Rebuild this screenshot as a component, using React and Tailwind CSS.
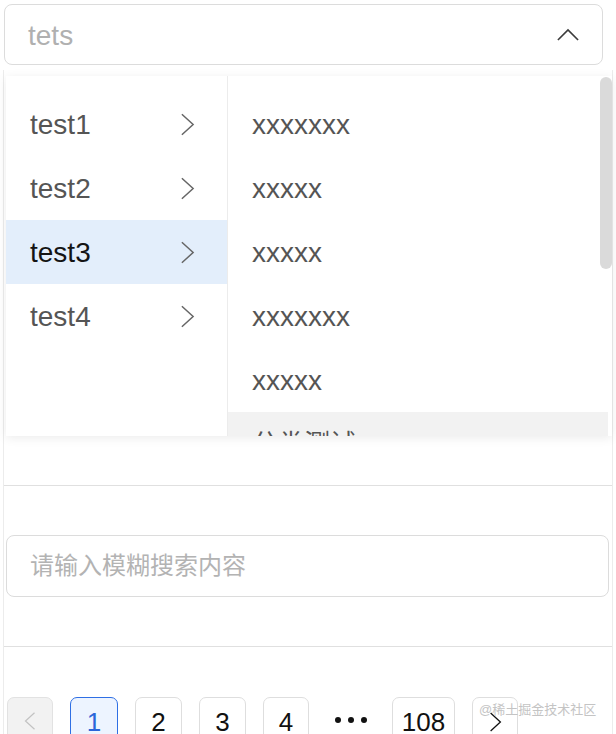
import { useState } from "react"

const ChevronRight = ({ className }) => (
  <svg viewBox="0 0 16 24" className={className} fill="none" stroke="currentColor" strokeWidth="1.6">
    <path d="M2 1 L14 12 L2 23" />
  </svg>
)

const ChevronLeft = ({ className }) => (
  <svg viewBox="0 0 16 24" className={className} fill="none" stroke="currentColor" strokeWidth="1.6">
    <path d="M14 1 L2 12 L14 23" />
  </svg>
)

const ChevronUp = ({ className }) => (
  <svg viewBox="0 0 24 14" className={className} fill="none" stroke="currentColor" strokeWidth="1.8">
    <path d="M1 13 L12 2 L23 13" />
  </svg>
)

const categories = ['test1', 'test2', 'test3', 'test4']
const options = ['xxxxxxx', 'xxxxx', 'xxxxx', 'xxxxxxx', 'xxxxx']

function PageButton({ children, active, className = '' }) {
  return (
    <div
      className={
        'h-[48px] shrink-0 rounded-[7px] flex items-start justify-center pt-[8px] text-[26px] leading-[32px] ' +
        (active
          ? 'border-[1.5px] border-[#2f6fe4] bg-[#edf4ff] text-[#2a66d9] '
          : 'border border-[#dedede] bg-white text-[#111] ') +
        className
      }
    >
      {children}
    </div>
  )
}

export default function App() {
  const [selected] = useState(2)

  return (
    <div className="relative w-[616px] h-[734px] bg-white overflow-hidden flex flex-col font-['Liberation_Sans','Noto_Sans_CJK_SC',sans-serif]">
      {/* select trigger */}
      <div className="mt-[4px] ml-[4px] w-[599px] h-[61px] shrink-0 rounded-[8px] border border-[#dcdcdc] flex items-center justify-between pl-[23px] pr-[23px]">
        <span className="text-[28px] text-[#b0b0b0] translate-y-[1px]">tets</span>
        <ChevronUp className="w-[22px] h-[13px] text-[#3c3c3c]" />
      </div>

      {/* page content behind the dropdown */}
      <div className="mt-[5px] ml-[3px] w-[610px] flex-1 border-x border-[#ececec] flex flex-col">
        <div className="h-[416px] shrink-0 border-b border-[#e0e0e0]" />
        <div className="pt-[49px] pb-[49px] pl-[2px] pr-[3px] border-b border-[#e0e0e0]">
          <div className="h-[62px] rounded-[8px] border border-[#dcdcdc] flex items-center pl-[23px]">
            <span className="text-[24px] text-[#b3b3b3]">请输入模糊搜索内容</span>
          </div>
        </div>
        <div className="pt-[50px] pl-[3px] flex gap-[17px]">
          <div className="w-[46px] h-[48px] rounded-[7px] border border-[#e2e2e2] bg-[#f2f2f2] flex items-start justify-center pt-[13px]">
            <ChevronLeft className="w-[12px] h-[20px] text-[#c2c2c2]" />
          </div>
          <PageButton active className="w-[48px]">1</PageButton>
          <PageButton className="w-[47px]">2</PageButton>
          <PageButton className="w-[47px]">3</PageButton>
          <PageButton className="w-[46px]">4</PageButton>
          <div className="w-[49px] h-[48px] flex items-start justify-center pt-[20px] gap-[7px]">
            <span className="w-[6px] h-[6px] rounded-full bg-[#111]" />
            <span className="w-[6px] h-[6px] rounded-full bg-[#111]" />
            <span className="w-[6px] h-[6px] rounded-full bg-[#111]" />
          </div>
          <PageButton className="w-[63px]">108</PageButton>
          <div className="w-[46px] h-[48px] rounded-[7px] border border-[#dedede] bg-white flex items-start justify-center pt-[13px]">
            <ChevronRight className="w-[13px] h-[22px] text-[#111]" />
          </div>
        </div>
      </div>

      {/* cascader dropdown */}
      <div className="absolute left-[6px] top-[76px] w-[606px] h-[360px] bg-white shadow-[0_2px_10px_rgba(0,0,0,0.08)] flex overflow-hidden">
        <div className="w-[222px] shrink-0 border-r border-[#ececec] pt-[16px]">
          {categories.map((c, i) => (
            <div
              key={c}
              className={
                'h-[64px] flex items-center justify-between pl-[24px] pr-[32px] ' +
                (i === selected ? 'bg-[#e3eefb]' : '')
              }
            >
              <span className={'text-[28px] translate-y-[1px] ' + (i === selected ? 'text-[#141414] font-medium' : 'text-[#555]')}>{c}</span>
              <ChevronRight className="w-[15px] h-[23px] text-[#666]" />
            </div>
          ))}
        </div>
        <div className="relative flex-1 pt-[16px] pr-[4px]">
          {options.map((o, i) => (
            <div key={i} className="h-[64px] flex items-center pl-[24px]">
              <span className="text-[28px] text-[#555] translate-y-[1px]">{o}</span>
            </div>
          ))}
          <div className="h-[64px] flex items-center pl-[24px] bg-[#f2f2f2]">
            <span className="text-[26px] text-[#555]">分类测试</span>
          </div>
          <div className="absolute right-0 top-[1px] w-[12px] h-[192px] rounded-full bg-[#dadada]" />
        </div>
      </div>

      {/* watermark */}
      <div className="absolute left-[479px] top-[700px] text-[13px] text-[#c4c4c4]">@稀土掘金技术社区</div>
    </div>
  )
}
